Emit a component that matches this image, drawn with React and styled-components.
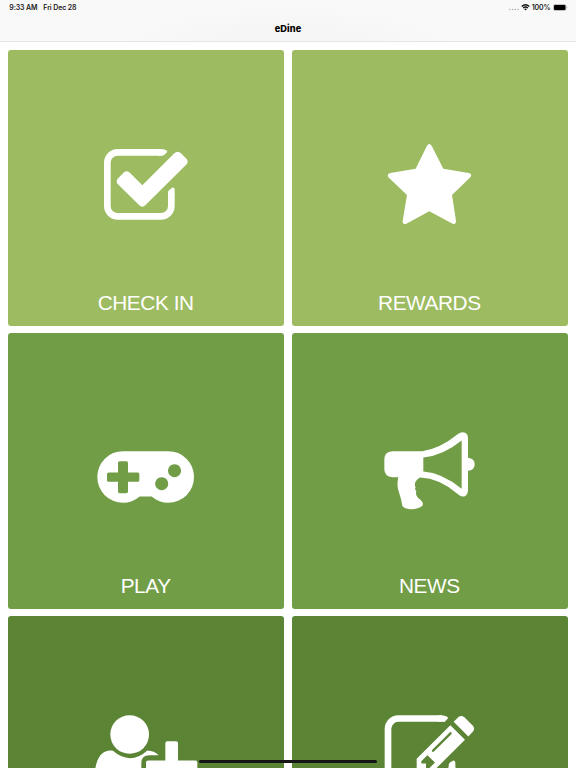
import React from "react";
import styled, { createGlobalStyle } from "styled-components";

const GlobalStyle = createGlobalStyle`
  * { box-sizing: border-box; }
  html, body { margin: 0; padding: 0; background: #fff; }
  body { height: 768px; overflow: hidden; font-family: Inter, "Liberation Sans", sans-serif; }
`;

const Screen = styled.div`
  position: relative;
  width: 576px;
  height: 768px;
  overflow: hidden;
  background: #fff;
`;

const Header = styled.header`
  height: 42px;
  background: radial-gradient(ellipse 160px 34px at 50% 100%, #f6f6f6 40%, #f9f9f9 100%);
  border-bottom: 1px solid #e5e5e5;
`;

const StatusBar = styled.div`
  display: flex;
  align-items: center;
  justify-content: space-between;
  height: 14px;
  padding: 0 8.5px 0 9.3px;
  font-size: 7px;
  font-weight: 600;
  line-height: 14px;
  letter-spacing: -0.13px;
  color: #222;
`;

const StatusGroup = styled.div`
  display: flex;
  align-items: center;
  gap: ${(p) => p.$gap}px;
`;

const StatusText = styled.span`
  padding-top: 1px;
  line-height: 13px;
`;

const Title = styled.h1`
  margin: 0;
  height: 27px;
  line-height: 29px;
  text-align: center;
  font-size: 9.2px;
  font-weight: 800;
  letter-spacing: 0.1px;
  color: #000;
`;

const Grid = styled.main`
  display: grid;
  grid-template-columns: 1fr 1fr;
  grid-auto-rows: 275.7px;
  gap: 7.5px 8px;
  padding: 8px 8.3px 0 8.3px;
`;

const Tile = styled.button`
  display: flex;
  flex-direction: column;
  align-items: center;
  border: 0;
  padding: 75px 0 0;
  border-radius: 3px;
  background: ${(p) => p.$color};
  color: #fff;
`;

const TileIcon = styled.svg`
  flex: none;
  width: 120px;
  height: 120px;
  fill: #fff;
`;

const Label = styled.span`
  margin: 45px 1px 0 0;
  font: 20.8px/26px "Liberation Sans", Arial, sans-serif;
  letter-spacing: -0.42px;
  white-space: nowrap;
`;

const HomeIndicator = styled.div`
  position: absolute;
  left: 199px;
  bottom: 5px;
  width: 178px;
  height: 3px;
  border-radius: 2px;
  background: #151515;
`;

const CheckIcon = () => (
  <TileIcon viewBox="-12 -30 360 360">
    <path d="M215 52H83A31 31 0 0 0 52 83V213A31 31 0 0 0 83 244H213A31 31 0 0 0 244 213V176" fill="none" stroke="#fff" strokeWidth="20" />
    <path d="M212 42Q226 43 231 47Q233 50 230 53L222 60Q220 62 216 62H205V42ZM234 180V172Q234 169 237 166L246 158Q253 156 254 163V180Z" />
    <path d="M83 131L102 112Q110 106 118 112L157 151L253 55Q263 46 273 55L290 72Q296 80 290 88L166 211Q157 219 148 211L83 147Q77 139 83 131Z" />
  </TileIcon>
);

const StarIcon = () => (
  <TileIcon viewBox="-15 -30 360 360">
    <path d="M156 32Q163 22 170 32L205 101L281 114Q293 117 286 127L231 180L243 258Q243 269 233 266L163 229L94 266Q82 269 83 258L96 180L40 127Q35 117 46 114L122 101Z" />
  </TileIcon>
);

const GamepadIcon = () => (
  <TileIcon viewBox="3 -66.5 360 360">
    <path
      fillRule="evenodd"
      d="M114 63H250A77 77 0 0 1 327 140A77 77 0 0 1 250 218Q222 218 200 199H164Q142 218 114 218A77 77 0 0 1 37 140A77 77 0 0 1 114 63ZM104 93Q99 93 99 98V127H71Q66 127 66 132V150Q66 155 71 155H99V184Q99 189 104 189H124Q129 189 129 184V155H158Q163 155 163 150V132Q163 127 158 127H129V98Q129 93 124 93ZM268.5 102A19.5 19.5 0 1 0 268.6 102ZM230 141A19.5 19.5 0 1 0 230.1 141Z"
    />
  </TileIcon>
);

const MegaphoneIcon = () => (
  <TileIcon viewBox="0 -36.5 360 360">
    <path
      fillRule="evenodd"
      d="M67 93H157Q208 87 265 41Q274 34 283 37Q294 41 294 54V113Q314 115 314 132Q314 150 294 152V209Q294 224 283 229Q273 231 264 222Q208 174 151 172Q138 178 135 189Q134 197 137 202Q133 205 137 211Q141 211 138 216Q137 223 143 232Q158 243 159 252Q159 258 149 262Q137 268 121 267Q101 266 97 257Q94 236 87 217Q79 194 85 171H67Q43 168 43 147V117Q43 95 67 93ZM160 112V154Q217 158 275 206V61Q218 107 160 112Z"
    />
  </TileIcon>
);

const AddUserIcon = () => (
  <TileIcon viewBox="18 -27.5 360 360">
    <circle cx="149" cy="103" r="58" />
    <path d="M99 152Q124 174 150 174Q177 174 202 151Q223 152 236 165H208Q184 165 184 189V239H256V276Q240 286 219 286H80Q43 282 43 246Q43 152 91 151Q96 150 99 152Z" />
    <path d="M262 123H288Q294 123 294 129V181H346Q352 181 352 187V213Q352 219 346 219H294V270H256V219H204Q198 219 198 213V187Q198 181 204 181H256V129Q256 123 262 123Z" />
  </TileIcon>
);

const EditIcon = () => (
  <TileIcon viewBox="0 -27.5 360 360">
    <path d="M215 55H85A31 31 0 0 0 54 86V216A31 31 0 0 0 85 247H215A31 31 0 0 0 246 216V200" fill="none" stroke="#fff" strokeWidth="20" />
    <path d="M212 45Q230 46 234 52Q234 55 231 58L225 64Q222 67 219 65H205V45ZM236 207V194Q237 190 240 187L250 181Q256 181 256 187V207Z" />
    <path d="M251 65L266 50Q274 44 283 51L308 76Q316 85 309 94L295 109Z" />
    <path
      fillRule="evenodd"
      d="M241 75L285 119L184 219H140V176ZM240 96L187 149Q183 156 191 155L244 102Q247 94 240 96ZM172 165L154 183V190H168V204H178L195 187Z"
    />
  </TileIcon>
);

const WifiIcon = () => (
  <svg width="9" height="7" viewBox="0 0 18 14" fill="none" stroke="#151515" strokeWidth="2.5">
    <path d="M1.3 5Q9-2 16.7 5M4.3 8Q9 4 13.7 8" />
    <path d="M6.3 10Q9 8 11.7 10L9 13Z" fill="#151515" stroke="none" />
  </svg>
);

const BatteryIcon = () => (
  <svg width="15" height="7" viewBox="0 0 30 14">
    <rect x="1" y="1" width="25" height="12" rx="3" fill="#fff" stroke="#888" />
    <rect x="2" y="2" width="23" height="10" rx="2" />
    <path d="M27.5 5Q30 7 27.5 9Z" fill="#888" />
  </svg>
);

const SignalIcon = () => (
  <svg width="10" height="7" viewBox="0 0 10 7" fill="#aaa">
    <circle cx="1" cy="5.5" r=".75" />
    <circle cx="3.7" cy="5.5" r=".75" />
    <circle cx="6.4" cy="5.5" r=".75" />
    <circle cx="9.1" cy="5.5" r=".75" />
  </svg>
);

const tiles = [
  { label: "CHECK IN", color: "#9dbb61", Icon: CheckIcon },
  { label: "REWARDS", color: "#9dbb61", Icon: StarIcon },
  { label: "PLAY", color: "#709d45", Icon: GamepadIcon },
  { label: "NEWS", color: "#709d45", Icon: MegaphoneIcon },
  { color: "#5b8435", Icon: AddUserIcon },
  { color: "#5b8435", Icon: EditIcon },
];

export default function App() {
  return (
    <Screen>
      <GlobalStyle />
      <Header>
        <StatusBar>
          <StatusGroup $gap={6}>
            <StatusText>9:33 AM</StatusText>
            <StatusText>Fri Dec 28</StatusText>
          </StatusGroup>
          <StatusGroup $gap={2}>
            <SignalIcon />
            <WifiIcon />
            <StatusText>100%</StatusText>
            <BatteryIcon />
          </StatusGroup>
        </StatusBar>
        <Title>eDine</Title>
      </Header>
      <Grid>
        {tiles.map(({ label, color, Icon }, index) => (
          <Tile key={index} $color={color}>
            <Icon />
            {label && <Label>{label}</Label>}
          </Tile>
        ))}
      </Grid>
      <HomeIndicator />
    </Screen>
  );
}
